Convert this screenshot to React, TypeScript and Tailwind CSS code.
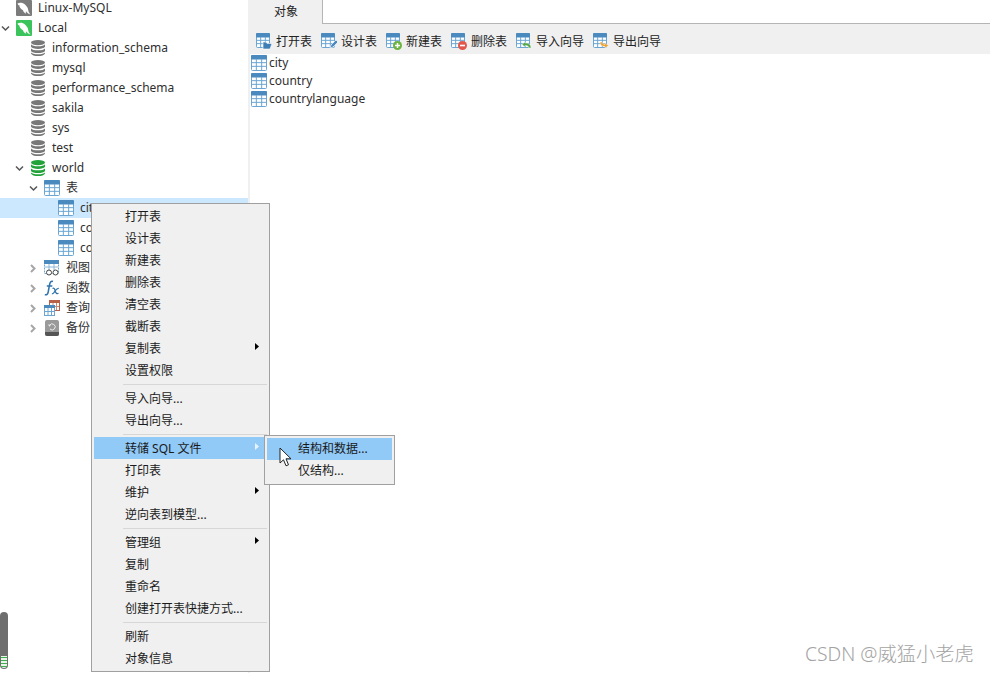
import React from "react";

const FONT = "font-['Noto_Sans','Noto_Sans_CJK_SC',sans-serif]";

function TableGrid({ x = 0, y = 0, w = 16, h = 16 }: { x?: number; y?: number; w?: number; h?: number }) {
  const c = "#6aa5d3";
  return (
    <g>
      <rect x={x + 0.5} y={y + 0.5} width={w - 1} height={h - 1} rx="1" fill="#fff" stroke={c} />
      <rect x={x} y={y} width={w} height={4.5} rx="1" fill="#4a8abf" />
      <path
        d={`M${x + w / 3} ${y + 4}V${y + h - 1}M${x + (2 * w) / 3} ${y + 4}V${y + h - 1}M${x + 1} ${y + 4 + (h - 5) / 3}H${x + w - 1}M${x + 1} ${y + 4 + (2 * (h - 5)) / 3}H${x + w - 1}`}
        stroke={c}
        strokeWidth="1"
        fill="none"
      />
    </g>
  );
}

function TableIcon() {
  return (
    <svg width="16" height="16" viewBox="0 0 16 16" className="shrink-0">
      <TableGrid />
    </svg>
  );
}

function ToolIcon({ kind }: { kind: "open" | "design" | "new" | "del" | "imp" | "exp" }) {
  return (
    <svg width="16" height="18" viewBox="0 0 16 18" className="shrink-0">
      <TableGrid w={14} h={15} y={0} />
      {kind === "open" && <path d="M7 9h3l1 1.500h5l-2 5.500H7z" fill="#3f7fb5" stroke="#fff" strokeWidth="0.6" />}
      {kind === "design" && <path d="M9 15l1-3 5-5 2 2-5 5z" fill="#4a8ac0" stroke="#fff" strokeWidth="0.6" />}
      {kind === "new" && (
        <g>
          <circle cx="11.500" cy="12.500" r="4.500" fill="#6cb33f" />
          <path d="M9 12.500h5M11.500 10v5" stroke="#fff" strokeWidth="1.500" />
        </g>
      )}
      {kind === "del" && (
        <g>
          <circle cx="11.500" cy="12.500" r="4.500" fill="#e2574c" />
          <path d="M9 12.500h5" stroke="#fff" strokeWidth="1.600" />
        </g>
      )}
      {kind === "imp" && (
        <path d="M9 9l-3 2.500L9 14v-1.500c2 0 3.500.5 4 2.500h2c0-3-2-5-6-5z" fill="#55a845" stroke="#fff" strokeWidth="0.4" />
      )}
      {kind === "exp" && (
        <path d="M7 9c0 3 2 4.500 5 4.500V15l3.500-2.500L12 10v1.500c-1.500 0-2.500-1-3-2.500z" fill="#f0a030" stroke="#fff" strokeWidth="0.4" />
      )}
    </svg>
  );
}

function Dolphin({ color }: { color: string }) {
  return (
    <svg width="16" height="16" viewBox="0 0 16 16" className="shrink-0">
      <rect width="16" height="16" rx="1" fill={color} />
      <path
        d="M1.500 3.500C4 2 7 2.500 9 4.500c2 2 3 3.500 3.200 5.500.2 1.500 1 3 2.300 4.500-2-.6-3.500-1.800-4.500-3.200-.3 1-.2 1.500.2 2.500-1.800-.8-3-2-3.200-3.500C5 9 3 7 3.500 5.500 2.500 5.500 2 4.500 1.500 3.500z"
        fill="#fff"
      />
    </svg>
  );
}

function DbIcon({ color }: { color: string }) {
  return (
    <svg width="14" height="16" viewBox="0 0 14 16" className="shrink-0">
      <ellipse cx="7" cy="2.600" rx="7" ry="2.600" fill={color} />
      <path d="M0 4.200c1 1.400 3.500 2 7 2s6-.6 7-2v2.600c-1 1.500-3.500 2.100-7 2.100S1 8.300 0 6.800z" fill={color} />
      <path d="M0 8.400c1 1.300 3.500 1.900 7 1.900s6-.6 7-1.900v2.600c-1 1.400-3.500 2-7 2S1 12.400 0 11z" fill={color} />
      <path d="M0 12.400c1 1.200 3.500 1.800 7 1.800s6-.6 7-1.800v1c-.6 1.600-3.500 2.600-7 2.600s-6.400-1-7-2.600z" fill={color} />
    </svg>
  );
}

function ViewIcon() {
  return (
    <svg width="16" height="16" viewBox="0 0 16 16" className="shrink-0">
      <rect x="0.500" y="0.500" width="14" height="13" fill="#fff" stroke="#6aa5d3" strokeDasharray="2 1" />
      <rect x="0" y="0" width="15" height="4" fill="#4a8abf" />
      <path d="M5 4v6M10 4v6M1 7h13" stroke="#8db8d8" />
      <circle cx="5" cy="12.500" r="2.500" fill="#fff" stroke="#444" />
      <circle cx="11.500" cy="12.500" r="2.500" fill="#fff" stroke="#444" />
    </svg>
  );
}

function FxIcon() {
  return (
    <svg width="16" height="16" viewBox="0 0 16 16" className="shrink-0">
      <path d="M9 1.500C6.800.8 6 2.500 5.500 5L4.200 12c-.4 2.200-1.500 3.300-3.400 2.600M2.800 6h5.500" stroke="#2f74ad" strokeWidth="1.500" fill="none" />
      <path d="M8.500 8.500c1.500-.8 2 .2 2.500 2s1.500 4 3.500 2.800M14.800 8.500c-1.500-.5-3 1.500-3.800 2.500s-2 3.500-3 2.500" stroke="#2f74ad" strokeWidth="1.200" fill="none" />
    </svg>
  );
}

function QueryIcon() {
  return (
    <svg width="16" height="16" viewBox="0 0 16 16" className="shrink-0">
      <rect x="5.500" y="0.500" width="10" height="10" fill="#fff" stroke="#b8614a" />
      <rect x="5" y="0" width="11" height="3" fill="#b8614a" />
      <path d="M9 3v7M12.500 3v7M6 6.500h9" stroke="#c98a78" />
      <rect x="0.500" y="5.500" width="10" height="10" fill="#fff" stroke="#6aa5d3" />
      <rect x="0" y="5" width="11" height="3" fill="#4a8abf" />
      <path d="M4 8v7M7.500 8v7M1 11.500h9" stroke="#6aa5d3" />
    </svg>
  );
}

function BackupIcon() {
  return (
    <svg width="14" height="16" viewBox="0 0 14 16" className="shrink-0">
      <rect width="14" height="16" rx="2" fill="#9a9a9a" />
      <path d="M0 12h14v2a2 2 0 0 1-2 2H2a2 2 0 0 1-2-2z" fill="#555" />
      <path d="M4.500 5.500A3 3 0 1 1 5 9" stroke="#eee" strokeWidth="1" fill="none" />
      <path d="M3 4.500l3 .2-1.500 2z" fill="#eee" />
    </svg>
  );
}

function Chevron({ open, dim }: { open?: boolean; dim?: boolean }) {
  return (
    <svg width="9" height="9" viewBox="0 0 9 9" className="ml-px shrink-0">
      <path
        d={open ? "M1 2.500l3.500 3.500L8 2.500" : "M2 1l3.500 3.500L2 8"}
        stroke={dim ? "#a6a6a6" : "#555"}
        strokeWidth={dim ? 2 : 1.5}
        fill="none"
      />
    </svg>
  );
}

type Row = {
  label: string;
  pad: string;
  icon: React.ReactNode;
  chevron?: "open" | "closed";
  selected?: boolean;
};

const gray = "#787878";
const rows: Row[] = [
  { label: "Linux-MySQL", pad: "pl-0", icon: <Dolphin color="#7b7b7b" /> },
  { label: "Local", pad: "pl-0", icon: <Dolphin color="#3cc45c" />, chevron: "open" },
  { label: "information_schema", pad: "pl-[14px]", icon: <DbIcon color={gray} /> },
  { label: "mysql", pad: "pl-[14px]", icon: <DbIcon color={gray} /> },
  { label: "performance_schema", pad: "pl-[14px]", icon: <DbIcon color={gray} /> },
  { label: "sakila", pad: "pl-[14px]", icon: <DbIcon color={gray} /> },
  { label: "sys", pad: "pl-[14px]", icon: <DbIcon color={gray} /> },
  { label: "test", pad: "pl-[14px]", icon: <DbIcon color={gray} /> },
  { label: "world", pad: "pl-[14px]", icon: <DbIcon color="#22a33a" />, chevron: "open" },
  { label: "表", pad: "pl-[28px]", icon: <TableIcon />, chevron: "open" },
  { label: "city", pad: "pl-[42px]", icon: <TableIcon />, selected: true },
  { label: "country", pad: "pl-[42px]", icon: <TableIcon /> },
  { label: "countrylanguage", pad: "pl-[42px]", icon: <TableIcon /> },
  { label: "视图", pad: "pl-[28px]", icon: <ViewIcon />, chevron: "closed" },
  { label: "函数", pad: "pl-[28px]", icon: <FxIcon />, chevron: "closed" },
  { label: "查询", pad: "pl-[28px]", icon: <QueryIcon />, chevron: "closed" },
  { label: "备份", pad: "pl-[28px]", icon: <BackupIcon />, chevron: "closed" },
];

function TreeRow({ row }: { row: Row }) {
  return (
    <div
      className={`flex h-5 items-center whitespace-nowrap text-xs leading-4 text-[#2f2f2f] ${row.pad} ${row.selected ? "bg-[#cce8ff]" : ""}`}
    >
      <div className="flex w-4 shrink-0 items-center">
        {row.chevron && <Chevron open={row.chevron === "open"} dim={row.chevron === "closed"} />}
      </div>
      <div className="flex w-4 shrink-0 justify-center">{row.icon}</div>
      <span className="ml-1.5">{row.label}</span>
    </div>
  );
}

const tools: { kind: "open" | "design" | "new" | "del" | "imp" | "exp"; label: string }[] = [
  { kind: "open", label: "打开表" },
  { kind: "design", label: "设计表" },
  { kind: "new", label: "新建表" },
  { kind: "del", label: "删除表" },
  { kind: "imp", label: "导入向导" },
  { kind: "exp", label: "导出向导" },
];

function Arrow({ light }: { light?: boolean }) {
  return (
    <svg width="4" height="7" viewBox="0 0 4 7" className="absolute right-[9px] top-[6px]">
      <path d="M0 0l4 3.500L0 7z" fill={light ? "#e8f3fd" : "#000"} />
    </svg>
  );
}

type Item = { label?: string; arrow?: boolean; active?: boolean; sep?: boolean };

const menu: Item[] = [
  { label: "打开表" },
  { label: "设计表" },
  { label: "新建表" },
  { label: "删除表" },
  { label: "清空表" },
  { label: "截断表" },
  { label: "复制表", arrow: true },
  { label: "设置权限" },
  { sep: true },
  { label: "导入向导..." },
  { label: "导出向导..." },
  { sep: true },
  { label: "转储 SQL 文件", arrow: true, active: true },
  { label: "打印表" },
  { label: "维护", arrow: true },
  { label: "逆向表到模型..." },
  { sep: true },
  { label: "管理组", arrow: true },
  { label: "复制" },
  { label: "重命名" },
  { label: "创建打开表快捷方式..." },
  { sep: true },
  { label: "刷新" },
  { label: "对象信息" },
];

export default function App() {
  return (
    <div className={`relative flex h-[673px] w-[990px] overflow-hidden bg-white ${FONT}`}>
      {/* Navigation tree */}
      <div className="w-[250px] shrink-0 border-r-2 border-[#f0f0f0]">
        <div className="-mt-[2px]">
          {rows.map((r) => (
            <TreeRow key={r.label} row={r} />
          ))}
        </div>
      </div>

      {/* Main area */}
      <div className="flex min-w-0 flex-1 flex-col">
        <div className="flex h-6 shrink-0">
          <div className="flex w-[73px] items-center justify-center border-r border-[#b5b5b5] bg-[#f0f0f0] text-xs text-[#222]">
            对象
          </div>
          <div className="flex-1 border-b border-[#b5b5b5]" />
        </div>
        <div className="flex h-[30px] shrink-0 items-center gap-[9px] bg-[#f0f0f0] pl-1.5 pt-1.5">
          {tools.map((t) => (
            <div key={t.kind} className="flex items-center gap-1 text-xs text-[#222]">
              <ToolIcon kind={t.kind} />
              <span>{t.label}</span>
            </div>
          ))}
        </div>
        <div className="pl-px">
          {["city", "country", "countrylanguage"].map((n) => (
            <div key={n} className="flex h-[18px] items-center gap-0.5 text-xs leading-4 text-[#2f2f2f]">
              <TableIcon />
              <span>{n}</span>
            </div>
          ))}
        </div>
      </div>

      {/* Context menu */}
      <div className="absolute left-[91px] top-[203px] w-[179px] border border-[#a0a0a0] bg-[#f0f0f0] py-px pb-[2px] pl-[2px] pr-px">
        {menu.map((m, i) =>
          m.sep ? (
            <div key={i} className="flex h-1.5 items-center pl-[29px] pr-px">
              <div className="h-px w-full bg-[#d7d7d7]" />
            </div>
          ) : (
            <div
              key={i}
              className={`relative flex h-[22px] items-center whitespace-nowrap pl-[31px] pt-[2px] text-xs leading-4 text-[#1a1a1a] ${m.active ? "bg-[#91c9f7]" : ""}`}
            >
              {m.label}
              {m.arrow && <Arrow light={m.active} />}
            </div>
          ),
        )}
      </div>

      {/* Submenu */}
      <div className="absolute left-[264px] top-[435px] w-[131px] border border-[#a0a0a0] bg-[#f0f0f0] p-[2px]">
        <div className="flex h-[22px] items-center bg-[#91c9f7] pl-[31px] text-xs leading-4 text-[#1a1a1a]">结构和数据...</div>
        <div className="flex h-[22px] items-center pl-[31px] text-xs leading-4 text-[#1a1a1a]">仅结构...</div>
      </div>

      {/* Mouse pointer */}
      <svg width="14" height="21" viewBox="0 0 14 21" className="absolute left-[279px] top-[447px]">
        <path d="M1 1v15l3.500-3.200 2.500 6 2.500-1-2.500-6H12z" fill="#fff" stroke="#222" strokeWidth="1" />
      </svg>

      {/* Scroll thumb */}
      <div className="absolute left-0 top-[612px] flex h-[57px] w-2 flex-col justify-end overflow-hidden rounded-full bg-[#6e6e6e] pb-px">
        <div className="mx-px flex h-3 flex-col justify-between rounded-b-full bg-[#e8f5e8] py-px">
          <div className="h-px bg-[#3fae4e]" />
          <div className="h-px bg-[#3fae4e]" />
          <div className="h-px bg-[#3fae4e]" />
          <div className="h-px bg-[#3fae4e]" />
        </div>
      </div>

      {/* Watermark */}
      <div className="absolute left-[805px] top-[642px] whitespace-nowrap text-[19.3px] font-light leading-6 text-[#a3a3a3]">
        CSDN @威猛小老虎
      </div>
    </div>
  );
}
